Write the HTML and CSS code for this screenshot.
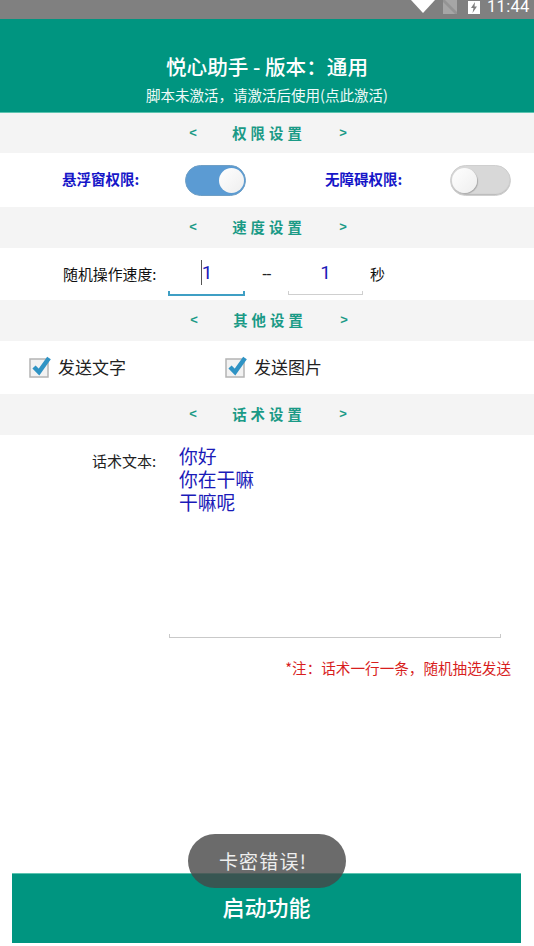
FILE: index.html
```html
<!DOCTYPE html>
<html lang="zh">
<head>
<meta charset="utf-8">
<title>悦心助手</title>
<link rel="stylesheet" href="styles.css">
</head>
<body>
<div class="app">
  <div class="status">
    <svg class="ic-wifi" width="24" height="13" viewBox="0 0 24 13"><path d="M0 0H24L12 13Z" fill="#fff"/></svg>
    <svg class="ic-sim" width="14" height="14" viewBox="0 0 14 14"><path d="M0 0H14V14H0Z" fill="#a6a6a6"/><path d="M2 0L14 12V14H12L0 2V0Z" fill="#949494"/></svg>
    <svg class="ic-bat" width="12" height="14" viewBox="0 0 12 14"><path d="M0 1H12V14H0Z" fill="#fff"/><path d="M7 2L3 8H5.5L4.5 13L9 6.5H6.5Z" fill="#808080"/></svg>
    <span class="time">11:44</span>
  </div>
  <header class="head">
    <div class="title">悦心助手 - 版本：通用</div>
    <div class="sub">脚本未激活，请激活后使用(点此激活)</div>
  </header>
  <div class="sec sec1"><span class="arr">&lt;</span><span class="sec-t">权限设置</span><span class="arr">&gt;</span></div>
  <div class="row perm">
    <span class="plabel pl1">悬浮窗权限:</span>
    <span class="sw on"><i></i></span>
    <span class="plabel pl2">无障碍权限:</span>
    <span class="sw off"><i></i></span>
  </div>
  <div class="sec"><span class="arr">&lt;</span><span class="sec-t">速度设置</span><span class="arr">&gt;</span></div>
  <div class="row speed">
    <span class="slabel">随机操作速度:</span>
    <span class="field focus"><span class="caret"></span>1</span>
    <span class="dash">--</span>
    <span class="field">1</span>
    <span class="unit">秒</span>
  </div>
  <div class="sec sec3"><span class="arr">&lt;</span><span class="sec-t">其他设置</span><span class="arr">&gt;</span></div>
  <div class="row checks">
    <span class="chk c1"><svg width="24" height="24" viewBox="0 0 24 24"><rect x="2" y="5" width="18" height="18" fill="#f2f2f2" stroke="#b4b4b4" stroke-width="1.5"/><path d="M6 13L11 18L21 4" fill="none" stroke="#2f93c4" stroke-width="4.5"/></svg>发送文字</span>
    <span class="chk c2"><svg width="24" height="24" viewBox="0 0 24 24"><rect x="2" y="5" width="18" height="18" fill="#f2f2f2" stroke="#b4b4b4" stroke-width="1.5"/><path d="M6 13L11 18L21 4" fill="none" stroke="#2f93c4" stroke-width="4.5"/></svg>发送图片</span>
  </div>
  <div class="sec"><span class="arr">&lt;</span><span class="sec-t">话术设置</span><span class="arr">&gt;</span></div>
  <div class="talk">
    <span class="tlabel">话术文本:</span>
    <div class="area">你好<br>你在干嘛<br>干嘛呢</div>
  </div>
  <div class="note">*注：话术一行一条，随机抽选发送</div>
  <div class="spacer"></div>
  <button class="start">启动功能</button>
  <div class="toast">卡密错误!</div>
</div>
</body>
</html>
```
FILE: styles.css
```css
* { box-sizing: border-box; }
html, body { margin: 0; padding: 0; background: #fff; }
body { font-family: "Noto Sans CJK SC", "Liberation Sans", sans-serif; }
.app { position: relative; width: 534px; height: 946px; display: flex; flex-direction: column; overflow: hidden; background: #fff; }
.status { height: 19px; flex: none; background: #808080; display: flex; align-items: flex-start; overflow: hidden; padding-left: 411px; }
.ic-wifi { flex: none; }
.ic-sim { flex: none; margin-left: 8px; }
.ic-bat { flex: none; margin-left: 11px; }
.time { margin-left: 7px; font: 16.5px/13px "Roboto", sans-serif; color: #fff; letter-spacing: .3px; white-space: nowrap; }
.head { height: 94px; flex: none; background: #009580; border-bottom: 1px solid #5cc4b0; color: #fff; text-align: center; padding-top: 33px; }
.title { font-size: 20.6px; font-weight: 500; line-height: 28px; }
.sub { font-size: 14.5px; line-height: 20px; margin-top: 5px; color: #f0faf8; }
.sec { height: 41px; flex: none; background: #f4f4f4; display: flex; align-items: center; justify-content: center; color: #1a9a86; font-weight: 700; padding: 0 0 2px 2px; }
.sec1 { height: 40px; }
.sec-t { font-size: 14.4px; letter-spacing: 4px; width: 114px; text-align: center; padding-left: 2px; margin: 0 11px; }
.arr { font: 700 13px/1 "Liberation Sans", sans-serif; width: 14px; text-align: center; }
.row { flex: none; background: #fff; display: flex; align-items: center; }
.perm { height: 54px; }
.plabel { font-size: 14.5px; font-weight: 700; line-height: 20px; margin-top: -2px; color: #1616c8; white-space: nowrap; }
.pl1 { margin-left: 62px; width: 123px; }
.pl2 { margin-left: 79px; width: 125px; }
.sw { width: 61px; height: 31px; border-radius: 16px; display: flex; align-items: center; flex: none; }
.sw i { display: block; width: 25px; height: 25px; border-radius: 50%; background: linear-gradient(135deg, #fff, #eee); }
.sw.on { background: #5b9bd3; border: 1px solid #6f9fc5; justify-content: flex-end; padding-right: 1px; }
.sw.off { background: #d8d8d8; border: 1px solid #cfcfcf; padding-left: 1px; box-shadow: inset 0 -1px 1px #bbb; }
.sw.off i { box-shadow: 1px 1px 1px #aaa; }
.speed { height: 52px; font-size: 14.9px; color: #111; align-items: flex-start; line-height: 20px; }
.slabel { margin: 16px 0 0 63px; width: 105px; white-space: nowrap; }
.field { --line: #cfcfcf; width: 75px; height: 47px; text-align: center; font: 19px/50px "Roboto", "Liberation Sans", sans-serif; color: #1a1ab8; background: linear-gradient(var(--line), var(--line)) left bottom / 100% 1px no-repeat, linear-gradient(var(--line), var(--line)) left bottom / 1px 4px no-repeat, linear-gradient(var(--line), var(--line)) right bottom / 1px 4px no-repeat; }
.field.focus { --line: #3f9fc4; width: 77px; height: 48px; background-size: 100% 2px, 2px 5px, 2px 5px; }
.caret { display: inline-block; width: 1px; height: 25px; background: #555; vertical-align: -6px; }
.dash { width: 43px; margin-top: 16px; padding-left: 17px; color: #222; font: 16px/20px "Liberation Sans", sans-serif; letter-spacing: -1px; }
.unit { margin: 16px 0 0 7px; font-size: 15px; }
.checks { height: 53px; font-size: 17px; line-height: 24px; color: #222; align-items: flex-start; padding-top: 14px; }
.chk { display: flex; align-items: center; gap: 6px; white-space: nowrap; }
.chk svg { margin-top: -2px; }
.c1 { margin-left: 28px; width: 196px; }
.sec3 { padding-left: 4px; }
.talk { flex: none; height: 203px; display: flex; align-items: flex-start; padding-left: 92px; }
.tlabel { font-size: 15px; line-height: 20px; color: #222; width: 77px; margin-top: 16px; white-space: nowrap; }
.area { width: 332px; height: 203px; padding: 9px 0 0 10px; font-size: 18.8px; line-height: 23px; color: #1a1ab8; background: linear-gradient(#c9c9c9, #c9c9c9) left bottom / 100% 1px no-repeat, linear-gradient(#c9c9c9, #c9c9c9) left bottom / 1px 4px no-repeat, linear-gradient(#c9c9c9, #c9c9c9) right bottom / 1px 4px no-repeat; }
.note { flex: none; margin-top: 20px; padding-right: 23px; text-align: right; font-size: 14.6px; line-height: 20px; color: #d81e1e; }
.spacer { flex: 1; }
.start { flex: none; width: 509px; height: 70px; margin: 0 0 3px 12px; border: 0; border-top: 1px solid #5cc4b0; background: #009580; color: #fff; font-family: inherit; font-size: 22px; font-weight: 500; padding: 0 0 6px; }
.toast { position: absolute; left: 188px; top: 834px; width: 158px; height: 54px; border-radius: 27px; background: rgba(70,70,70,.8); color: #eee; font-size: 19px; line-height: 54px; text-align: center; letter-spacing: 1.2px; padding-right: 8px; }
```
